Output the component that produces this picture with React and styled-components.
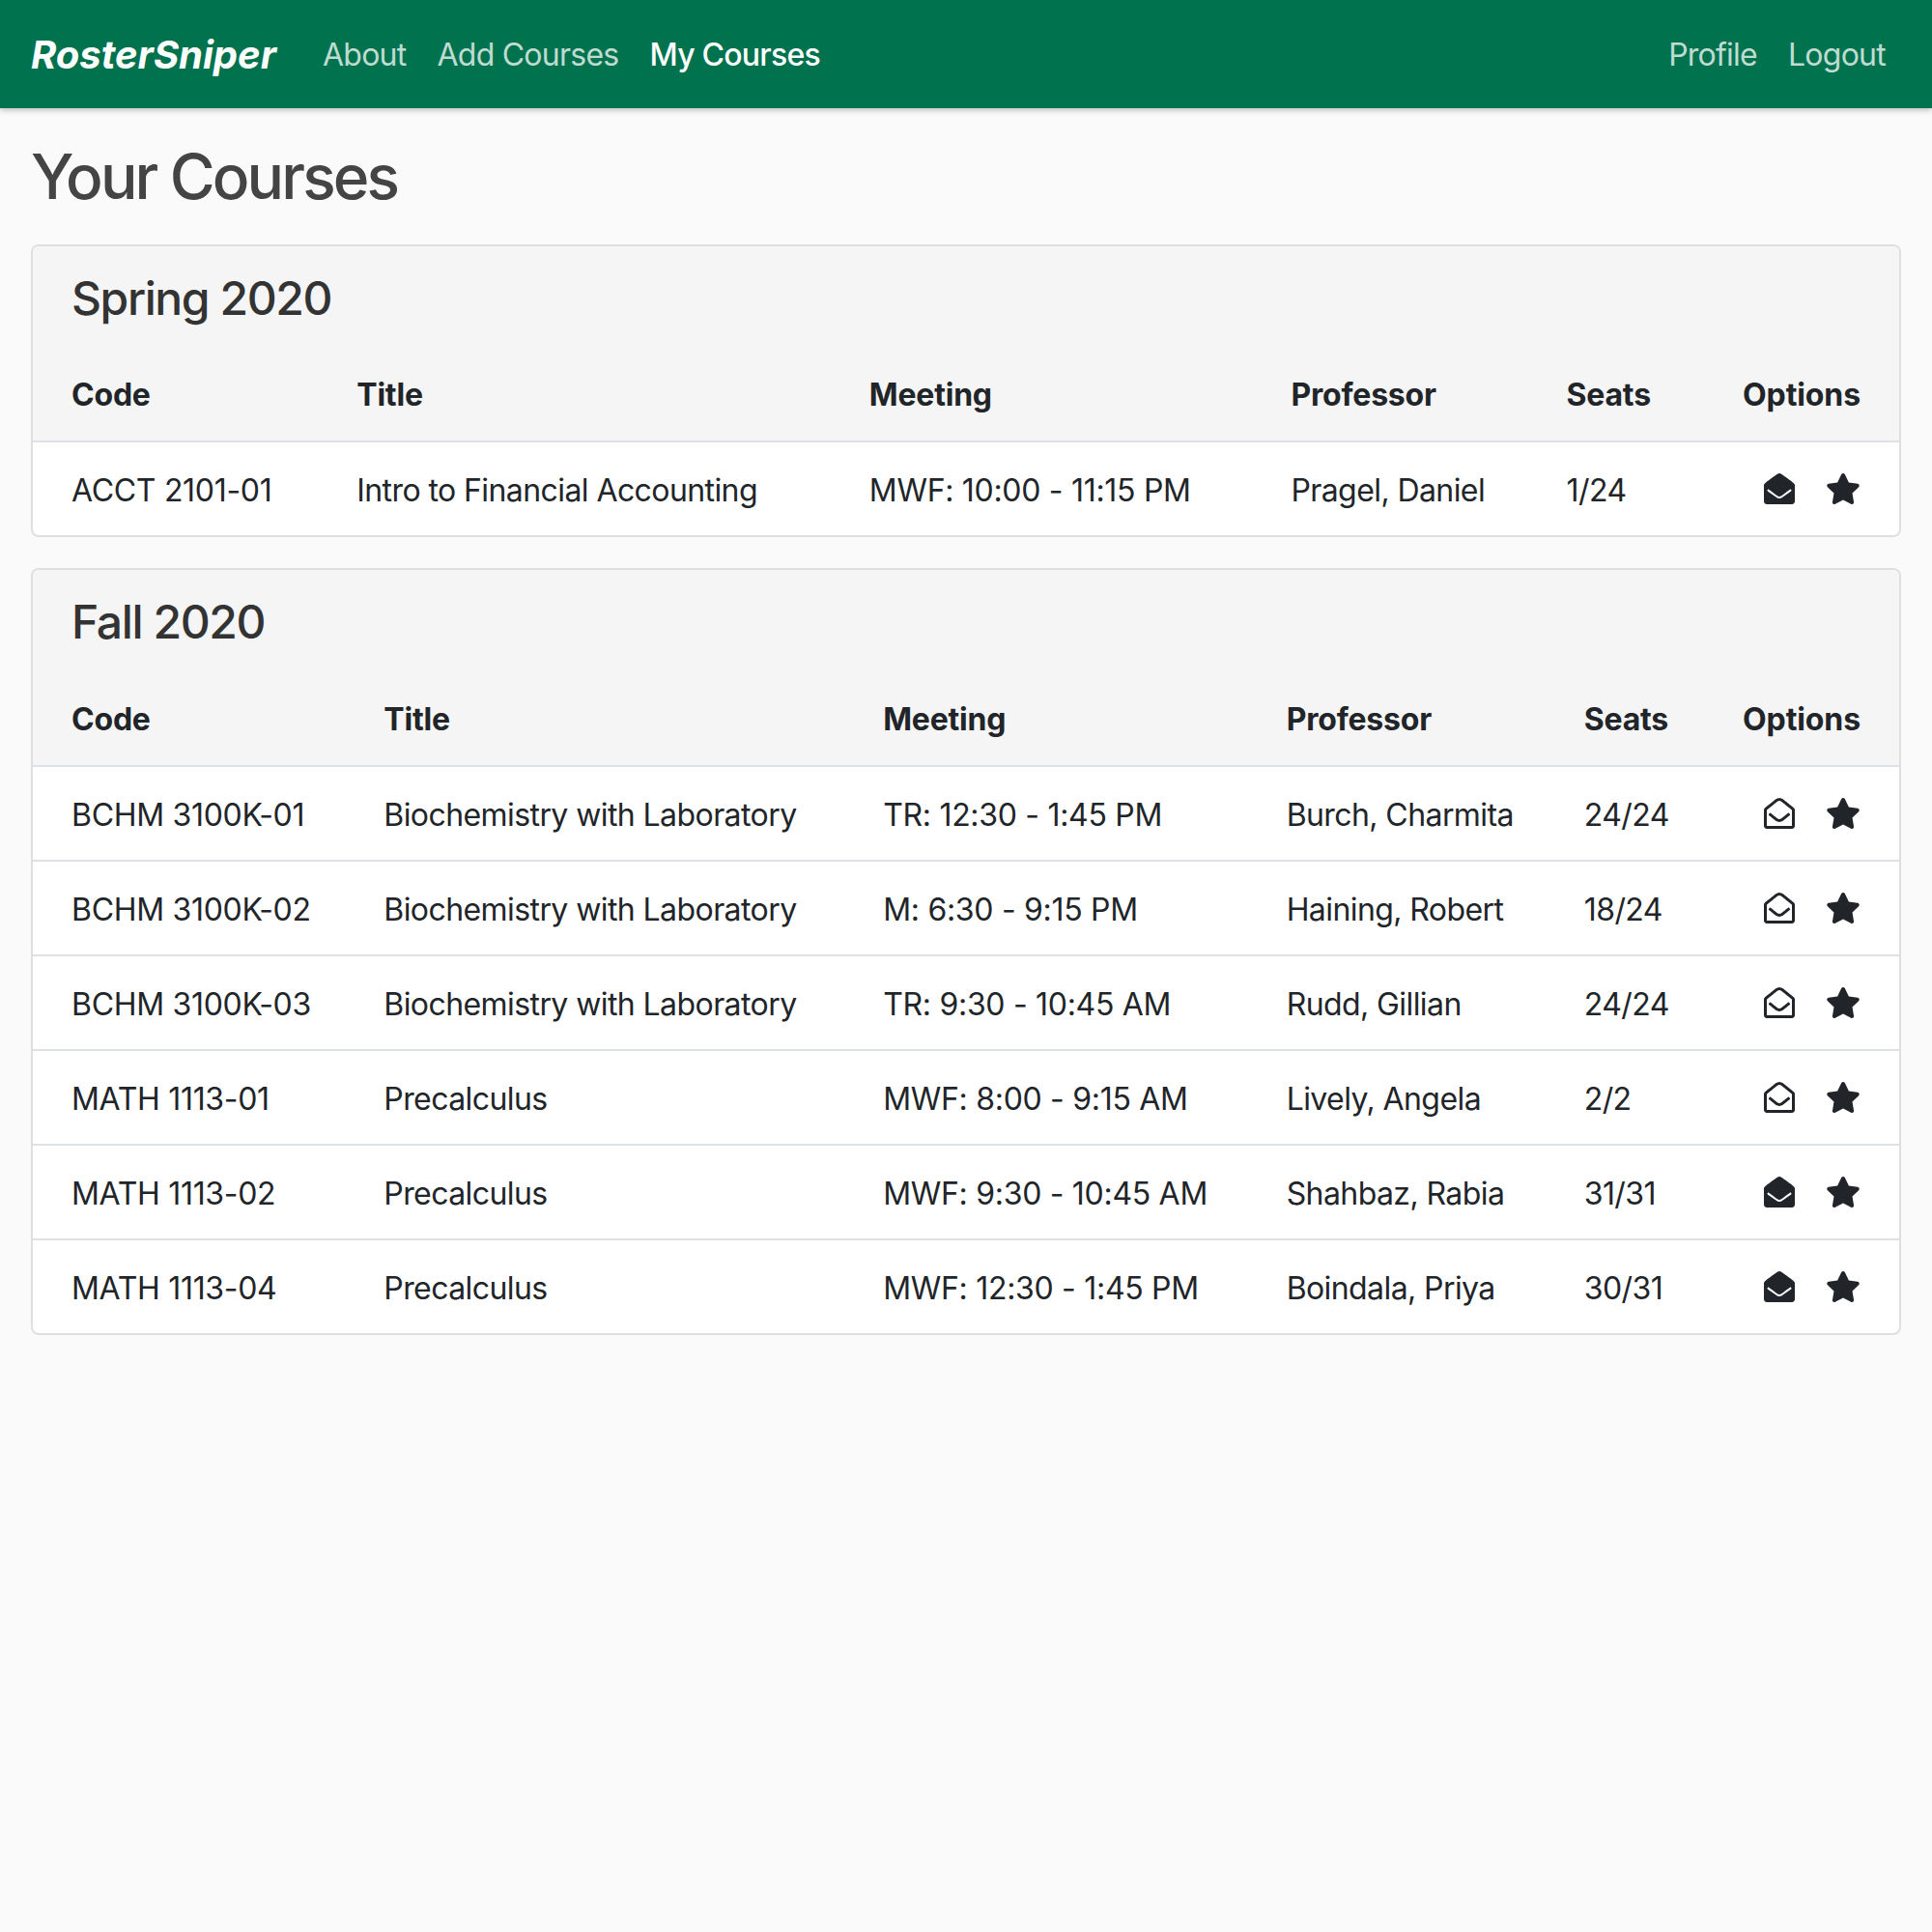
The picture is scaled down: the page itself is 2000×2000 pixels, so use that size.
import React from 'react';
import styled, { createGlobalStyle } from 'styled-components';
import { FaEnvelopeOpen, FaRegEnvelopeOpen, FaStar } from 'react-icons/fa';

const terms = [
  {
    name: 'Spring 2020',
    courses: [
      { code: 'ACCT 2101-01', title: 'Intro to Financial Accounting', meeting: 'MWF: 10:00 - 11:15 PM', professor: 'Pragel, Daniel', seats: '1/24', subscribed: true },
    ],
  },
  {
    name: 'Fall 2020',
    courses: [
      { code: 'BCHM 3100K-01', title: 'Biochemistry with Laboratory', meeting: 'TR: 12:30 - 1:45 PM', professor: 'Burch, Charmita', seats: '24/24' },
      { code: 'BCHM 3100K-02', title: 'Biochemistry with Laboratory', meeting: 'M: 6:30 - 9:15 PM', professor: 'Haining, Robert', seats: '18/24' },
      { code: 'BCHM 3100K-03', title: 'Biochemistry with Laboratory', meeting: 'TR: 9:30 - 10:45 AM', professor: 'Rudd, Gillian', seats: '24/24' },
      { code: 'MATH 1113-01', title: 'Precalculus', meeting: 'MWF: 8:00 - 9:15 AM', professor: 'Lively, Angela', seats: '2/2' },
      { code: 'MATH 1113-02', title: 'Precalculus', meeting: 'MWF: 9:30 - 10:45 AM', professor: 'Shahbaz, Rabia', seats: '31/31', subscribed: true },
      { code: 'MATH 1113-04', title: 'Precalculus', meeting: 'MWF: 12:30 - 1:45 PM', professor: 'Boindala, Priya', seats: '30/31', subscribed: true },
    ],
  },
];

export default function App() {
  return (
    <>
      <GlobalStyle />
      <Navbar>
        <Brand>RosterSniper</Brand>
        <NavLink>About</NavLink>
        <NavLink>Add Courses</NavLink>
        <NavLink $active>My Courses</NavLink>
        <NavSpacer />
        <NavLink>Profile</NavLink>
        <NavLink>Logout</NavLink>
      </Navbar>
      <Main>
        <PageTitle>Your Courses</PageTitle>
        {terms.map((term) => (
          <Card key={term.name}>
            <CardTitle>{term.name}</CardTitle>
            <Table>
              <thead>
                <tr>
                  <Th>Code</Th>
                  <Th>Title</Th>
                  <Th>Meeting</Th>
                  <Th>Professor</Th>
                  <Th>Seats</Th>
                  <Th>Options</Th>
                </tr>
              </thead>
              <tbody>
                {term.courses.map((course) => (
                  <tr key={course.code}>
                    <Td $spacing="-0.3px">{course.code}</Td>
                    <Td>{course.title}</Td>
                    <Td $spacing="-0.3px">{course.meeting}</Td>
                    <Td>{course.professor}</Td>
                    <Td>{course.seats}</Td>
                    <Td>
                      <Options>
                        {course.subscribed ? <FaEnvelopeOpen size={32} /> : <FaRegEnvelopeOpen size={32} />}
                        <StarIcon />
                      </Options>
                    </Td>
                  </tr>
                ))}
              </tbody>
            </Table>
          </Card>
        ))}
      </Main>
    </>
  );
}

const GlobalStyle = createGlobalStyle`
  body {
    margin: 0;
    min-height: 2000px;
    background: #fafafa;
    color: #212529;
    font-family: Inter, "Liberation Sans", sans-serif;
    font-size: 32px;
    line-height: 48px;
  }
`;

const Navbar = styled.nav`
  display: flex;
  align-items: center;
  box-sizing: border-box;
  height: 112px;
  padding: 2px 32px 0;
  background: #00724e;
  box-shadow: 0 2px 6px rgba(0, 0, 0, 0.25);
`;

const Brand = styled.span`
  margin-right: 32px;
  color: #fff;
  font-size: 40px;
  font-weight: 700;
  font-style: italic;
`;

const NavLink = styled.a`
  padding: 0 16px;
  color: ${(props) => (props.$active ? '#fff' : 'rgba(255, 255, 255, 0.75)')};
  font-weight: ${(props) => (props.$active ? 500 : 400)};
  letter-spacing: -0.75px;
`;

const NavSpacer = styled.div`
  flex: 1;
`;

const Main = styled.main`
  padding: 33px 32px;
`;

const PageTitle = styled.h1`
  margin: 0 0 32px;
  color: #444;
  font-size: 64px;
  font-weight: 500;
  line-height: 76px;
  letter-spacing: -2.85px;
`;

const Card = styled.section`
  margin-bottom: 32px;
  border: 2px solid rgba(0, 0, 0, 0.125);
  border-radius: 8px;
  overflow: hidden;
  background: #fff;
`;

const CardTitle = styled.h3`
  margin: 0;
  padding: 25px 40px 22.4px;
  background: #f5f5f5;
  color: #333;
  font-size: 48px;
  font-weight: 500;
  line-height: 58px;
  letter-spacing: -1.4px;
`;

const Table = styled.table`
  width: 100%;
  border-collapse: collapse;
`;

const Th = styled.th`
  padding: 25px 24px 23px;
  background: #f5f5f5;
  border-bottom: 2px solid #dee2e6;
  font-weight: 700;
  text-align: left;
  white-space: nowrap;
  letter-spacing: -0.2px;

  &:first-child {
    padding-left: 40px;
  }
  &:last-child {
    padding-right: 40px;
    text-align: right;
    letter-spacing: -0.1px;
  }
`;

const Td = styled.td`
  padding: 26px 24px 22px;
  border-top: 2px solid #dee2e6;
  white-space: nowrap;
  letter-spacing: ${(props) => props.$spacing || '-0.58px'};

  tr:first-child > & {
    border-top: 0;
  }
  &:first-child {
    padding-left: 40px;
  }
  &:last-child {
    padding-right: 40px;
  }
`;

const Options = styled.div`
  display: flex;
  justify-content: flex-end;
  align-items: center;
  gap: 32px;
  height: 48px;
  margin: -2px 0 2px;
`;

const StarIcon = styled(FaStar)`
  width: 36px;
  height: 32px;
`;
